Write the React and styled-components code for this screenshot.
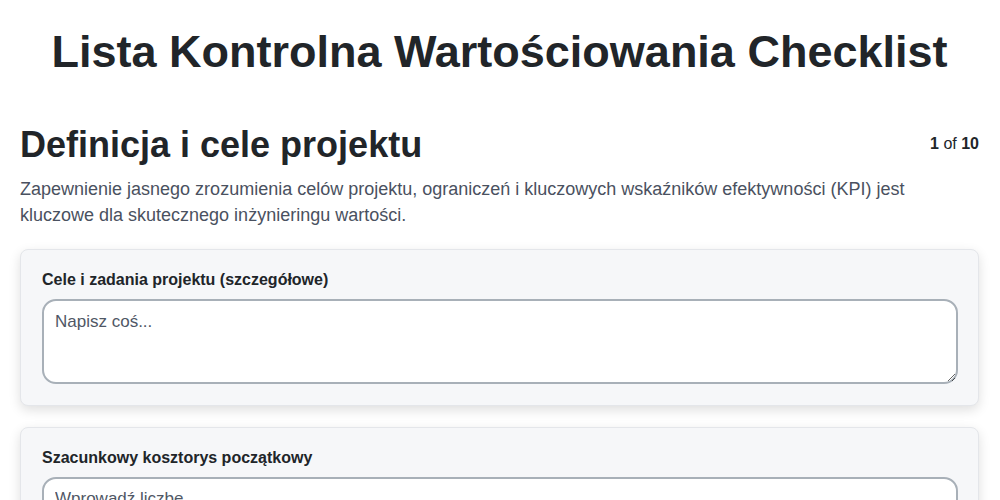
import React from 'react';
import styled, { createGlobalStyle } from 'styled-components';

const GlobalStyle = createGlobalStyle`
  body {
    margin: 0;
    background: #ffffff;
    font-family: "Liberation Sans", Arial, sans-serif;
    color: #212529;
  }
`;

const Page = styled.div`
  padding: 0 21px 40px 20px;
`;

const Title = styled.h1`
  margin: 0;
  padding: 27px 0 0;
  text-align: center;
  font-size: 45px;
  line-height: 50px;
  font-weight: 700;
  color: #212529;
`;

const SectionHead = styled.div`
  display: flex;
  justify-content: space-between;
  align-items: flex-start;
  margin-top: 46px;
`;

const SectionTitle = styled.h2`
  margin: 0;
  font-size: 36px;
  line-height: 44px;
  font-weight: 700;
  color: #212529;
`;

const Counter = styled.div`
  font-size: 16px;
  color: #212529;
  padding-top: 12px;
  b {
    font-weight: 700;
  }
`;

const Description = styled.p`
  margin: 9px 0 21px;
  font-size: 18px;
  line-height: 26px;
  color: #4a5160;
`;

const Card = styled.div`
  background: #f6f7f9;
  border: 1px solid #e4e6ea;
  border-radius: 8px;
  box-shadow: 0 4px 12px rgba(0, 0, 0, 0.13);
  padding: 20px 20px 21px 21px;
  margin-bottom: 21px;
`;

const Label = styled.label`
  display: block;
  font-size: 16px;
  line-height: 20px;
  font-weight: 700;
  color: #212529;
  margin-bottom: 9px;
`;

const fieldBase = `
  display: block;
  width: 100%;
  box-sizing: border-box;
  border: 2px solid #a8b0b8;
  border-radius: 14px;
  background: #ffffff;
  font-family: "Liberation Sans", Arial, sans-serif;
  font-size: 17px;
  color: #212529;
  padding: 10px 11px;
  outline: none;
  &::placeholder {
    color: #4f5765;
  }
`;

const TextArea = styled.textarea`
  ${fieldBase}
  height: 85px;
  resize: vertical;
  line-height: 22px;
`;

const Input = styled.input`
  ${fieldBase}
  height: 44px;
`;

export default function App() {
  return (
    <>
      <GlobalStyle />
      <Page>
        <Title>Lista Kontrolna Wartościowania Checklist</Title>
        <SectionHead>
          <SectionTitle>Definicja i cele projektu</SectionTitle>
          <Counter>
            <b>1</b> of <b>10</b>
          </Counter>
        </SectionHead>
        <Description>
          Zapewnienie jasnego zrozumienia celów projektu, ograniczeń i kluczowych wskaźników
          efektywności (KPI) jest kluczowe dla skutecznego inżynieringu wartości.
        </Description>
        <Card>
          <Label>Cele i zadania projektu (szczegółowe)</Label>
          <TextArea placeholder="Napisz coś..." />
        </Card>
        <Card>
          <Label>Szacunkowy kosztorys początkowy</Label>
          <Input type="number" placeholder="Wprowadź liczbę" />
        </Card>
      </Page>
    </>
  );
}
